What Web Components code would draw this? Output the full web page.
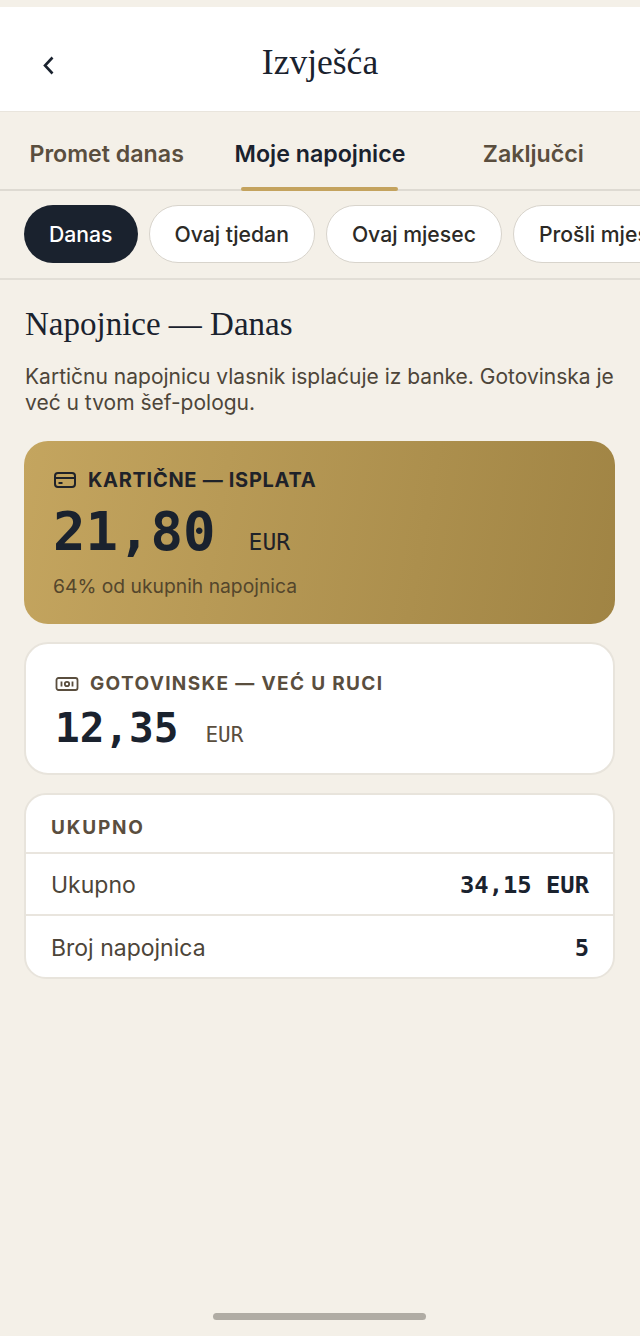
<!DOCTYPE html>
<html lang="hr">
<head>
<meta charset="utf-8">
<title>Izvješća</title>
<style>
  html, body { margin: 0; background: #f4f0e8; }
  body { font-family: Inter, "Liberation Sans", sans-serif; color: #1a222e; overflow: hidden; }
  reports-app { height: 1336px; }
</style>
</head>
<body>
<reports-app>
  <top-bar title="Izvješća"></top-bar>
  <tab-row>
    <tab-item>Promet danas</tab-item>
    <tab-item active>Moje napojnice</tab-item>
    <tab-item>Zaključci</tab-item>
  </tab-row>
  <chip-row>
    <filter-chip active>Danas</filter-chip>
    <filter-chip>Ovaj tjedan</filter-chip>
    <filter-chip>Ovaj mjesec</filter-chip>
    <filter-chip>Prošli mjesec</filter-chip>
  </chip-row>
  <tip-intro heading="Napojnice — Danas">Kartičnu napojnicu vlasnik isplaćuje iz banke. Gotovinska je već u tvom šef-pologu.</tip-intro>
  <amount-card variant="gold" label="KARTIČNE — ISPLATA" amount="21,80" note="64% od ukupnih napojnica"></amount-card>
  <amount-card label="GOTOVINSKE — VEĆ U RUCI" amount="12,35"></amount-card>
  <summary-card heading="UKUPNO">
    <summary-row label="Ukupno" value="34,15 EUR"></summary-row>
    <summary-row label="Broj napojnica" value="5"></summary-row>
  </summary-card>
</reports-app>

<script>
const MONO = '"DejaVu Sans Mono", "Liberation Mono", monospace';
const SERIF = '"Liberation Serif", serif';

const ICONS = {
  card: `<svg width="24" height="18" viewBox="0 0 24 18" fill="none" stroke="currentColor" stroke-width="2"><rect x="2" y="2" width="20" height="14" rx="3"/><path d="M2 7h20"/><path d="M5.500 12h4"/></svg>`,
  cash: `<svg width="24" height="16" viewBox="0 0 24 16" fill="none" stroke="currentColor" stroke-width="1.800"><rect x="1.500" y="2" width="21" height="12" rx="2"/><circle cx="12" cy="8" r="2.200"/><path d="M6.500 5.500v5M17.500 5.500v5"/></svg>`
};

class ReportsApp extends HTMLElement {
  connectedCallback() {
    const shadow = this.attachShadow({ mode: 'open' });
    shadow.innerHTML = `
      <style>
        :host { display: flex; flex-direction: column; background: #f4f0e8; padding-top: 7px; box-sizing: border-box; }
        .bar { margin: auto 0 16px 213px; width: 213px; height: 7px; border-radius: 4px; background: #b0aca4; flex: none; }
      </style>
      <slot></slot>
      <div class="bar"></div>
    `;
  }
}

class TopBar extends HTMLElement {
  connectedCallback() {
    const shadow = this.attachShadow({ mode: 'open' });
    shadow.innerHTML = `
      <style>
        :host { display: grid; grid-template-columns: 96px 1fr 96px; align-items: center; height: 105px; background: #fff; border-bottom: 1px solid #e9e5dd; box-sizing: border-box; }
        button { all: unset; display: flex; padding-left: 40px; margin-top: 12px; color: #1a222e; }
        h1 { margin: 6px 0 0; text-align: center; font: 400 35.500px/44px ${SERIF}; color: #1a222e; }
      </style>
      <button aria-label="Natrag">
        <svg width="16" height="22" viewBox="0 0 16 22" fill="none" stroke="currentColor" stroke-width="2.600"><path d="M12.500 3.500 5 11.500l7.500 8"/></svg>
      </button>
      <h1>${this.getAttribute('title')}</h1>
      <span></span>
    `;
  }
}

class TabRow extends HTMLElement {
  connectedCallback() {
    const shadow = this.attachShadow({ mode: 'open' });
    shadow.innerHTML = `
      <style>
        :host { display: grid; grid-template-columns: repeat(3, 1fr); height: 79px; border-bottom: 2px solid #dedad2; box-sizing: border-box; }
      </style>
      <slot></slot>
    `;
  }
}

class TabItem extends HTMLElement {
  connectedCallback() {
    const shadow = this.attachShadow({ mode: 'open' });
    shadow.innerHTML = `
      <style>
        :host { display: flex; flex-direction: column; align-items: center; justify-content: flex-end; height: 79px; font-size: 23.200px; font-weight: 600; color: #5a4e3e; }
        :host([active]) { color: #1a222e; }
        .label { line-height: 30px; margin-bottom: 18px; white-space: nowrap; }
        .line { width: 157px; height: 4px; border-radius: 2px; background: transparent; }
        :host([active]) .line { background: #c4a35e; }
      </style>
      <span class="label"><slot></slot></span>
      <span class="line"></span>
    `;
  }
}

class ChipRow extends HTMLElement {
  connectedCallback() {
    const shadow = this.attachShadow({ mode: 'open' });
    shadow.innerHTML = `
      <style>
        :host { display: flex; gap: 11px; padding: 14px 0 15px 24px; border-bottom: 2px solid #e2ded6; overflow: hidden; }
      </style>
      <slot></slot>
    `;
  }
}

class FilterChip extends HTMLElement {
  connectedCallback() {
    const shadow = this.attachShadow({ mode: 'open' });
    shadow.innerHTML = `
      <style>
        :host { display: flex; flex: none; align-items: center; height: 58px; box-sizing: border-box; padding: 0 25px; border-radius: 29px; border: 1.500px solid #d8d4cc; background: #fff; color: #2c2a26; font-size: 21.200px; font-weight: 500; white-space: nowrap; }
        :host([active]) { background: #1a222e; border: none; color: #fff; }
      </style>
      <slot></slot>
    `;
  }
}

class TipIntro extends HTMLElement {
  connectedCallback() {
    const shadow = this.attachShadow({ mode: 'open' });
    shadow.innerHTML = `
      <style>
        :host { display: block; padding: 23px 24px 0 25px; }
        h2 { margin: 0; font: 400 33px/42px ${SERIF}; color: #1a222e; }
        p { margin: 19px 0 25px; font-size: 21px; line-height: 26px; color: #4d4539; }
      </style>
      <h2>${this.getAttribute('heading')}</h2>
      <p><slot></slot></p>
    `;
  }
}

class AmountCard extends HTMLElement {
  connectedCallback() {
    const gold = this.getAttribute('variant') === 'gold';
    const note = this.getAttribute('note');
    const shadow = this.attachShadow({ mode: 'open' });
    shadow.innerHTML = `
      <style>
        :host { display: block; margin: 0 25px 18px 24px; box-sizing: border-box; border-radius: 24px; }
        :host([variant="gold"]) { height: 183px; padding: 26px 29px; background: linear-gradient(100deg, #c4a55f 0%, #a08444 100%); }
        :host(:not([variant="gold"])) { height: 133px; padding: 27px 29px; background: #fff; border: 2px solid #e8e4dc; }
        .label { display: flex; align-items: center; gap: 11px; font-weight: 700; font-size: ${gold ? 20 : 19}px; line-height: 26px; letter-spacing: ${gold ? 0.7 : 1.35}px; color: ${gold ? '#1f2229' : '#5a4e3e'}; }
        .label svg { flex: none; }
        .amount { display: flex; align-items: baseline; margin-top: ${gold ? 7 : 5}px; gap: ${gold ? 33 : 27}px; font-family: ${MONO}; font-weight: 700; font-size: ${gold ? 54 : 41}px; line-height: ${gold ? 64 : 52}px; color: #1a222e; }
        .unit { font-size: ${gold ? 23 : 21}px; font-weight: 500; color: ${gold ? '#1f2229' : '#5a4e3e'}; }
        .note { margin-top: -1px; font-size: 19.300px; line-height: 26px; color: #54462c; }
      </style>
      <div class="label">${gold ? ICONS.card : ICONS.cash}<span>${this.getAttribute('label')}</span></div>
      <div class="amount"><span>${this.getAttribute('amount')}</span><span class="unit">EUR</span></div>
      ${note ? `<div class="note">${note}</div>` : ''}
    `;
  }
}

class SummaryCard extends HTMLElement {
  connectedCallback() {
    const shadow = this.attachShadow({ mode: 'open' });
    shadow.innerHTML = `
      <style>
        :host { display: block; margin: 0 25px 0 24px; background: #fff; border: 2px solid #e8e4dc; border-radius: 22px; overflow: hidden; }
        .head { padding: 8px 25px 0; height: 57px; box-sizing: border-box; display: flex; align-items: center; font-weight: 700; font-size: 19px; letter-spacing: 1.800px; color: #5a4e3e; }
      </style>
      <div class="head">${this.getAttribute('heading')}</div>
      <slot></slot>
    `;
  }
}

class SummaryRow extends HTMLElement {
  connectedCallback() {
    const shadow = this.attachShadow({ mode: 'open' });
    shadow.innerHTML = `
      <style>
        :host { display: flex; justify-content: space-between; align-items: center; height: 62px; box-sizing: border-box; padding: 2px 24px 0 25px; border-top: 2px solid #e9e5de; }
        :host(:last-child) { height: 63px; }
        .k { font-size: 23px; color: #4d4539; }
        .v { font-family: ${MONO}; font-size: 23.800px; font-weight: 700; color: #1a222e; }
      </style>
      <span class="k">${this.getAttribute('label')}</span>
      <span class="v">${this.getAttribute('value')}</span>
    `;
  }
}

customElements.define('reports-app', ReportsApp);
customElements.define('top-bar', TopBar);
customElements.define('tab-row', TabRow);
customElements.define('tab-item', TabItem);
customElements.define('chip-row', ChipRow);
customElements.define('filter-chip', FilterChip);
customElements.define('tip-intro', TipIntro);
customElements.define('amount-card', AmountCard);
customElements.define('summary-card', SummaryCard);
customElements.define('summary-row', SummaryRow);
</script>
</body>
</html>
